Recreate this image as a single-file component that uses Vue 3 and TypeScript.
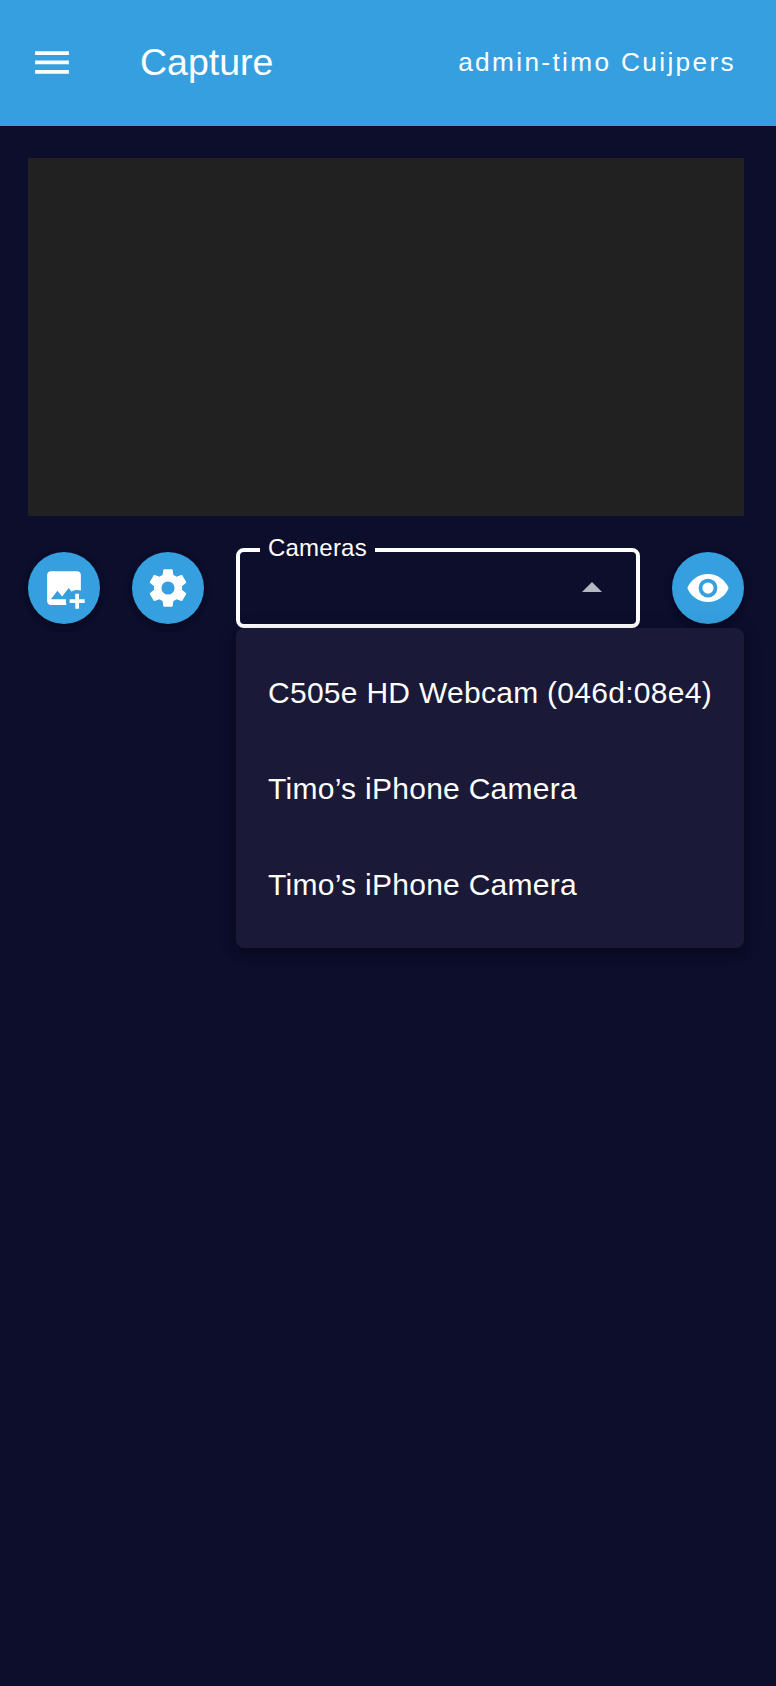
<script setup lang="ts">
interface Camera {
  id: number
  label: string
}

const userName = 'admin-timo Cuijpers'
const cameras: Camera[] = [
  { id: 1, label: 'C505e HD Webcam (046d:08e4)' },
  { id: 2, label: 'Timo’s iPhone Camera' },
  { id: 3, label: 'Timo’s iPhone Camera' },
]
</script>

<template>
  <div class="app">
    <header class="bar">
      <button class="nav" aria-label="Menu">
        <svg class="nav-icon" viewBox="-0.8 -0.47 25.6 25.6"><path d="M3,6H21V8H3V6M3,11H21V13H3V11M3,16H21V18H3V16Z" /></svg>
      </button>
      <h1 class="title">Capture</h1>
      <span class="user">{{ userName }}</span>
    </header>

    <main class="content">
      <div class="preview"></div>

      <div class="controls">
        <button class="fab" aria-label="Add image">
          <svg class="icon" viewBox="-7.2 -7.2 38.4 38.4">
            <path d="M18 15V18H15V20H18V23H20V20H23V18H20V15H18M13.3 21H5C3.9 21 3 20.1 3 19V5C3 3.9 3.9 3 5 3H19C20.1 3 21 3.9 21 5V13.3C20.4 13.1 19.7 13 19 13C17.9 13 16.8 13.3 15.9 13.9L14.5 12L11 16.5L8.5 13.5L5 18H13.1C13 18.3 13 18.7 13 19C13 19.7 13.1 20.4 13.3 21Z" />
          </svg>
        </button>
        <button class="fab" aria-label="Settings">
          <svg class="icon" viewBox="-7.2 -7.2 38.4 38.4">
            <path d="M12,15.5A3.5,3.5 0 0,1 8.5,12A3.5,3.5 0 0,1 12,8.5A3.5,3.5 0 0,1 15.5,12A3.5,3.5 0 0,1 12,15.5M19.43,12.97C19.47,12.65 19.5,12.33 19.5,12C19.5,11.67 19.47,11.34 19.43,11L21.54,9.37C21.73,9.22 21.78,8.95 21.66,8.73L19.66,5.27C19.54,5.05 19.27,4.96 19.05,5.05L16.56,6.05C16.04,5.66 15.5,5.32 14.87,5.07L14.5,2.42C14.46,2.18 14.25,2 14,2H10C9.75,2 9.54,2.18 9.5,2.42L9.13,5.07C8.5,5.32 7.96,5.66 7.44,6.05L4.95,5.05C4.73,4.96 4.46,5.05 4.34,5.27L2.34,8.73C2.21,8.95 2.27,9.22 2.46,9.37L4.57,11C4.53,11.34 4.5,11.67 4.5,12C4.5,12.33 4.53,12.65 4.57,12.97L2.46,14.63C2.27,14.78 2.21,15.05 2.34,15.27L4.34,18.73C4.46,18.95 4.73,19.03 4.95,18.95L7.44,17.94C7.96,18.34 8.5,18.68 9.13,18.93L9.5,21.58C9.54,21.82 9.75,22 10,22H14C14.25,22 14.46,21.82 14.5,21.58L14.87,18.93C15.5,18.67 16.04,18.34 16.56,17.94L19.05,18.95C19.27,19.03 19.54,18.95 19.66,18.73L21.66,15.27C21.78,15.05 21.73,14.78 21.54,14.63L19.43,12.97Z" />
          </svg>
        </button>

        <div class="select">
          <span class="label">Cameras</span>
          <svg class="caret" viewBox="0 0 24 24"><path d="M7,10L12,15L17,10H7Z" /></svg>
        </div>

        <button class="fab" aria-label="Show">
          <svg class="icon" viewBox="-7.2 -7.2 38.4 38.4">
            <path d="M12,9A3,3 0 0,0 9,12A3,3 0 0,0 12,15A3,3 0 0,0 15,12A3,3 0 0,0 12,9M12,17A5,5 0 0,1 7,12A5,5 0 0,1 12,7A5,5 0 0,1 17,12A5,5 0 0,1 12,17M12,4.5C7,4.5 2.73,7.61 1,12C2.73,16.39 7,19.5 12,19.5C17,19.5 21.27,16.39 23,12C21.27,7.61 17,4.5 12,4.5Z" />
          </svg>
        </button>

        <ul class="menu">
          <li v-for="camera in cameras" :key="camera.id" class="item">{{ camera.label }}</li>
        </ul>
      </div>
    </main>
  </div>
</template>

<style>
body {
  margin: 0;
  background: #0d0e2c;
}
</style>

<style scoped>
.app {
  min-height: 1686px;
  background: #0d0e2c;
  color: #fff;
  font-family: "Liberation Sans", Arial, sans-serif;
}
button {
  border: 0;
  padding: 0;
  color: inherit;
  background: none;
  flex: none;
}
.bar {
  display: flex;
  align-items: center;
  box-sizing: border-box;
  height: 126px;
  padding: 0 40px 0 28px;
  background: #369fdf;
}
.nav-icon {
  display: block;
  width: 48px;
  height: 48px;
  fill: currentColor;
}
.icon {
  display: block;
  width: 72px;
  height: 72px;
  fill: currentColor;
}
.title {
  margin: 0 auto 0 64px;
  padding-bottom: 2px;
  font-size: 37.5px;
  font-weight: 400;
  line-height: 56px;
}
.user {
  padding-bottom: 2px;
  font-size: 26.25px;
  letter-spacing: 2.34px;
}
.content {
  padding: 32px 32px 0 28px;
}
.preview {
  height: 358px;
  background: #212121;
}
.controls {
  position: relative;
  display: flex;
  align-items: center;
  gap: 32px;
  margin-top: 32px;
}
.fab {
  width: 72px;
  height: 72px;
  border-radius: 50%;
  background: #369fdf;
  box-shadow: 0 3px 5px -1px rgba(0, 0, 0, 0.2), 0 3px 6px rgba(0, 0, 0, 0.14), 0 1px 10px rgba(0, 0, 0, 0.12);
}
.select {
  position: relative;
  display: flex;
  flex: 1;
  align-items: center;
  justify-content: flex-end;
  box-sizing: border-box;
  height: 80px;
  padding-right: 20px;
  border: 4px solid #fff;
  border-radius: 8px;
}
.label {
  position: absolute;
  top: -20px;
  left: 20px;
  padding: 0 8px;
  background: #0d0e2c;
  font-size: 24px;
  line-height: 32px;
  letter-spacing: 0.22px;
}
.caret {
  width: 48px;
  height: 48px;
  fill: rgba(255, 255, 255, 0.7);
  transform: rotate(180deg);
}
.menu {
  position: absolute;
  top: 100%;
  left: 208px;
  right: 0;
  margin: 0;
  padding: 16px 0;
  list-style: none;
  border-radius: 8px;
  background: #1a1a38;
  box-shadow: 0 4px 8px -2px rgba(0, 0, 0, 0.2), 0 8px 10px rgba(0, 0, 0, 0.14), 0 2px 20px rgba(0, 0, 0, 0.12);
}
.item {
  box-sizing: border-box;
  height: 96px;
  padding: 1px 0 0 32px;
  font-size: 30px;
  line-height: 96px;
  letter-spacing: 0.28px;
  white-space: nowrap;
}
</style>
